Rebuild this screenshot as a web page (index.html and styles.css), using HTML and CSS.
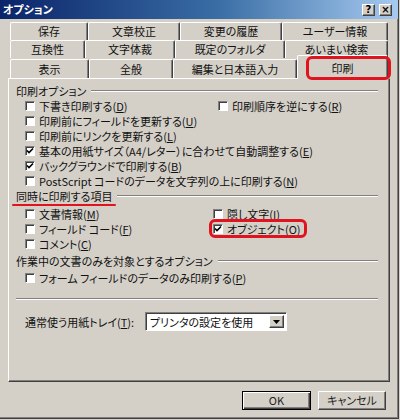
FILE: index.html
```html
<!DOCTYPE html>
<html lang="ja">
<head>
<meta charset="utf-8">
<title>オプション</title>
<link rel="stylesheet" href="styles.css">
</head>
<body>
<div class="window">
  <div class="titlebar">
    <span class="title">オプション</span>
    <div class="tb-btns"><span class="tbtn">?</span><span class="tbtn">×</span></div>
  </div>

  <div class="tabs">
    <div class="tabrow row1">
      <div class="tab">保存</div><div class="tab">文章校正</div><div class="tab">変更の履歴</div><div class="tab">ユーザー情報</div>
    </div>
    <div class="tabrow row2">
      <div class="tab">互換性</div><div class="tab">文字体裁</div><div class="tab">既定のフォルダ</div><div class="tab">あいまい検索</div>
    </div>
    <div class="tabrow row3">
      <div class="tab">表示</div><div class="tab">全般</div><div class="tab">編集と日本語入力</div><div class="tab active">印刷<span class="hl hl-tab"></span></div>
    </div>
  </div>

  <div class="panel">
    <div class="ghead"><span>印刷オプション</span></div>
    <div class="opts opts1">
      <label class="cb"><span class="box"></span>下書き印刷する(<u>D</u>)</label>
      <label class="cb"><span class="box"></span>印刷順序を逆にする(<u>R</u>)</label>
      <label class="cb span"><span class="box"></span>印刷前にフィールドを更新する(<u>U</u>)</label>
      <label class="cb span"><span class="box"></span>印刷前にリンクを更新する(<u>L</u>)</label>
      <label class="cb span"><span class="box"><svg viewBox="0 0 8 8"><path d="M1 3.5 L3 5.5 L7 1.5" /></svg></span>基本の用紙サイズ（A4/レター）に合わせて自動調整する(<u>E</u>)</label>
      <label class="cb span"><span class="box"><svg viewBox="0 0 8 8"><path d="M1 3.5 L3 5.5 L7 1.5" /></svg></span>バックグラウンドで印刷する(<u>B</u>)</label>
      <label class="cb span"><span class="box"></span>PostScript コードのデータを文字列の上に印刷する(<u>N</u>)</label>
    </div>

    <div class="ghead g2"><span class="redline-wrap">同時に印刷する項目<span class="redline"></span></span></div>
    <div class="opts opts2">
      <label class="cb"><span class="box"></span>文書情報(<u>M</u>)</label>
      <label class="cb"><span class="box"></span>隠し文字(<u>I</u>)</label>
      <label class="cb"><span class="box"></span>フィールド コード(<u>F</u>)</label>
      <label class="cb hl-host"><span class="box"><svg viewBox="0 0 8 8"><path d="M1 3.5 L3 5.5 L7 1.5" /></svg></span>オブジェクト(<u>O</u>)<span class="hl hl-obj"></span></label>
      <label class="cb span"><span class="box"></span>コメント(<u>C</u>)</label>
    </div>

    <div class="ghead g3"><span>作業中の文書のみを対象とするオプション</span></div>
    <div class="opts opts3">
      <label class="cb span"><span class="box"></span>フォーム フィールドのデータのみ印刷する(<u>P</u>)</label>
    </div>

    <div class="sep"></div>

    <div class="tray">
      <span class="tray-label">通常使う用紙トレイ(<u>T</u>):</span>
      <div class="select"><span class="val">プリンタの設定を使用</span><span class="arrow"><svg viewBox="0 0 7 4"><path d="M0 0 H7 L3.5 4 Z"/></svg></span></div>
    </div>
  </div>

  <div class="buttons">
    <div class="btn default">OK</div>
    <div class="btn">キャンセル</div>
  </div>
</div>
</body>
</html>
```

FILE: styles.css
```css
* { box-sizing: border-box; }

body {
  margin: 0;
  background: #D4D0C8;
  font-family: "Noto Sans CJK JP", "Noto Sans", sans-serif;
  font-feature-settings: "palt" 1;
  font-size: 11px;
  color: #111;
}

.window {
  width: 399px;
  height: 419px;
  background: #D4D0C8;
  border-right: 1px solid #404040;
  border-bottom: 1px solid #404040;
  box-shadow: inset -1px -1px #808080;
  display: flex;
  flex-direction: column;
  position: relative;
}

.titlebar {
  height: 19px;
  background: linear-gradient(to right, #0A246A, #3A6EA5 55%, #A6CAF0);
  display: flex;
  align-items: center;
  justify-content: space-between;
  padding: 0 6px 0 3px;
}
.title {
  color: #fff;
  font-weight: bold;
  font-size: 11px;
  line-height: 19px;
}
.tb-btns { display: flex; gap: 4px; }
.tbtn {
  width: 13px;
  height: 12px;
  background: #D4D0C8;
  border: 1px solid;
  border-color: #fff #404040 #404040 #fff;
  box-shadow: inset -1px -1px #808080;
  font: bold 10px/10px "DejaVu Sans", sans-serif;
  text-align: center;
  color: #000;
}

.tabs {
  margin: 3px 0 0 10px;
  width: 378px;
}
.tabrow {
  display: grid;
  height: 18px;
}
.row1 { grid-template-columns: 78px 92px 102px 106px; }
.row2 { grid-template-columns: 75px 90px 110px 103px; }
.row3 { grid-template-columns: 79px 84px 124px 91px; height: 20px; }

.tab {
  border-top: 1px solid #fff;
  border-left: 1px solid #fff;
  border-right: 1px solid #404040;
  box-shadow: inset -1px 0 #808080;
  border-radius: 2px 2px 0 0;
  text-align: center;
  line-height: 16px;
  white-space: nowrap;
}
.row3 .tab { margin-top: 1px; height: 19px; line-height: 18px; }
.row3 .tab.active {
  margin-top: -3px;
  height: 24px;
  line-height: 24px;
  background: #D4D0C8;
  position: relative;
  z-index: 1;
}

.hl {
  position: absolute;
  border: 3px solid #E0141E;
  border-radius: 6px;
  pointer-events: none;
}
.hl-tab { left: 8px; right: -4px; top: 0; bottom: -1px; }

.panel {
  margin-left: 8px;
  width: 382px;
  height: 304px;
  border: 1px solid;
  border-color: #fff #404040 #404040 #fff;
  box-shadow: inset -1px -1px #808080;
  padding: 5px 11px 0 7px;
  display: flex;
  flex-direction: column;
}

.ghead {
  display: flex;
  align-items: center;
  height: 14px;
  line-height: 14px;
  white-space: nowrap;
}
.ghead::after {
  content: "";
  flex: 1;
  border-top: 1px solid #808080;
  border-bottom: 1px solid #fff;
  margin-left: 5px;
}
.g2 { margin-top: 1px; }
.g3 { margin-top: 3px; }

.redline-wrap { position: relative; }
.redline {
  position: absolute;
  left: -4px;
  top: 15px;
  width: 104px;
  height: 2px;
  background: #E0141E;
  border-radius: 1px;
}

.opts {
  display: grid;
  grid-auto-rows: 15px;
  margin-left: 9px;
}
.opts1 { grid-template-columns: 193px 1fr; }
.opts2 { grid-template-columns: 188px 1fr; margin-top: 3px; }
.opts3 { grid-template-columns: 1fr; margin-top: 2px; }
.span { grid-column: 1 / -1; }

.cb {
  display: flex;
  align-items: center;
  white-space: nowrap;
  height: 15px;
}
.hl-host { position: relative; width: fit-content; }
.hl-obj { left: -4px; right: -6px; top: -2px; bottom: -2px; }

.box {
  width: 10px;
  height: 10px;
  flex: none;
  border: 1px solid;
  border-color: #808080 #fff #fff #808080;
  box-shadow: inset 1px 1px #404040;
  background: #fff;
  margin-right: 4px;
  display: flex;
  align-items: center;
  justify-content: center;
}
.box svg { width: 8px; height: 8px; }
.box path { fill: none; stroke: #000; stroke-width: 1.6; }

u { text-decoration: underline; text-underline-offset: 1px; }

.sep {
  margin-top: 13px;
  border-top: 1px solid #808080;
  border-bottom: 1px solid #fff;
}

.tray {
  display: flex;
  align-items: center;
  margin-top: 12px;
  margin-left: 9px;
}
.tray-label { width: 120px; white-space: nowrap; }
.select {
  width: 142px;
  height: 19px;
  display: flex;
  border: 1px solid;
  border-color: #808080 #fff #fff #808080;
  box-shadow: inset 1px 1px #404040;
  background: #fff;
  padding: 2px;
}
.select .val { flex: 1; line-height: 14px; padding-left: 2px; white-space: nowrap; }
.select .arrow {
  width: 15px;
  background: #D4D0C8;
  border: 1px solid;
  border-color: #fff #404040 #404040 #fff;
  box-shadow: inset -1px -1px #808080;
  display: flex;
  align-items: center;
  justify-content: center;
}
.select .arrow svg { width: 7px; height: 4px; }
.select .arrow path { fill: #000; }

.buttons {
  display: flex;
  justify-content: flex-end;
  gap: 7px;
  margin-top: 9px;
  padding-right: 12px;
}
.btn {
  width: 68px;
  height: 19px;
  border: 1px solid;
  border-color: #fff #404040 #404040 #fff;
  box-shadow: inset -1px -1px #808080;
  text-align: center;
  line-height: 17px;
  color: #222;
}
.btn.default {
  width: 69px;
  border-color: #000;
  box-shadow: inset 1px 1px #fff, inset -1px -1px #404040, inset -2px -2px #808080;
}
```
